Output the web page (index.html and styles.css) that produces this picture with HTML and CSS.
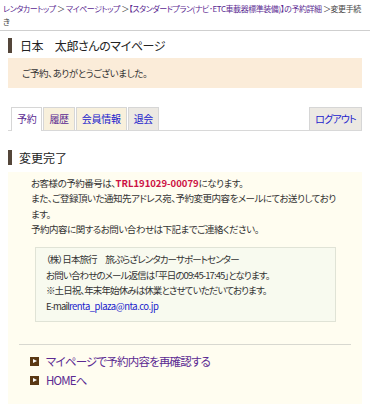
FILE: index.html
```html
<!DOCTYPE html>
<html lang="ja">
<head>
    <meta charset="UTF-8">
    <meta name="viewport" content="width=device-width, initial-scale=1.0">
    <title>変更完了 | マイページ</title>
    <link rel="stylesheet" href="styles.css">
</head>
<body>

    <!-- パンくず -->
    <div class="breadcrumb">
        <a href="#" class="visited">レンタカートップ</a> ＞ <a href="#" class="visited">マイページトップ</a> ＞<a href="#" class="visited">【スタンダードプラン(ナビ･ETC車載器標準装備)】の予約詳細</a> ＞変更手続き
    </div>

    <div class="main">
        <h1 class="page-title">日本　太郎さんのマイページ</h1>
        <div class="notice">ご予約、ありがとうございました。</div>

        <!-- タブ -->
        <div class="tabs">
            <a href="#" class="tab tab-active visited">予約</a>
            <a href="#" class="tab tab-beige visited">履歴</a>
            <a href="#" class="tab tab-beige">会員情報</a>
            <a href="#" class="tab tab-gray">退会</a>
            <a href="#" class="tab tab-gray tab-logout">ログアウト</a>
        </div>

        <h2 class="section-title">変更完了</h2>

        <div class="content">
            <p class="message">
                お客様の予約番号は、<strong class="rsv-no">TRL191029-00079</strong>になります。<br>
                また、ご登録頂いた通知先アドレス宛、予約変更内容をメールにてお送りしております。<br>
                予約内容に関するお問い合わせは下記までご連絡ください。
            </p>

            <div class="contact">
                （株）日本旅行　旅ぷらざレンタカーサポートセンター<br>
                お問い合わせのメール返信は「平日の09:45-17:45」となります。<br>
                ※土日祝、年末年始休みは休業とさせていただいております。<br>
                <span class="mail">E-mail<a href="#">renta_plaza@nta.co.jp</a></span>
            </div>

            <hr class="divider">

            <ul class="links">
                <li><span class="arrow"></span><a href="#" class="visited">マイページで予約内容を再確認する</a></li>
                <li><span class="arrow"></span><a href="#" class="visited">HOMEへ</a></li>
            </ul>
        </div>
    </div>

</body>
</html>
```

FILE: styles.css
```css
/* 基本 */
body {
    margin: 0;
    font-family: "Noto Sans CJK JP", sans-serif;
    font-feature-settings: "palt";
    color: #333;
    background: #fff;
}

a {
    color: #2222cc;
    text-decoration: none;
}

a.visited {
    color: #5b2a92;
}

/* パンくず */
.breadcrumb {
    padding: 2px 3px 2px 3px;
    font-size: 8px;
    letter-spacing: -0.45px;
    line-height: 13px;
    border-bottom: 1px solid #cfcfcf;
    color: #444;
}

.main {
    padding: 0 8px;
}

/* 見出し */
.page-title {
    margin: 7px 0 0 0;
    padding-left: 8px;
    border-left: 4px solid #54463a;
    font-size: 12px;
    letter-spacing: -0.4px;
    font-weight: normal;
    line-height: 15px;
    color: #222;
}

.notice {
    margin-top: 5px;
    height: 30px;
    line-height: 30px;
    padding: 0 14px;
    background: #fbecd9;
    font-size: 9.5px;
    letter-spacing: -0.4px;
}

/* タブ */
.tabs {
    display: flex;
    gap: 1px;
    margin-top: 19px;
    padding-left: 3px;
    border-bottom: 1px solid #d8d8d8;
}

.tab {
    display: block;
    height: 22px;
    line-height: 22px;
    padding: 0 5px;
    font-size: 10px;
    letter-spacing: -0.3px;
    border: 1px solid #d6d6d6;
    border-bottom: none;
    margin-bottom: -1px;
}

.tab-active {
    background: #fff;
    height: 23px;
}

.tab-beige {
    background: #f8f0dc;
}

.tab-gray {
    background: #ece9e3;
}

.tab-logout {
    margin-left: auto;
    padding: 0 5px;
    letter-spacing: -0.8px;
}

.section-title {
    margin: 19px 0 0 0;
    padding-left: 7px;
    border-left: 4px solid #54463a;
    font-size: 12px;
    font-weight: normal;
    line-height: 15px;
    color: #222;
}

/* 本文 */
.content {
    margin-top: 7px;
    padding: 4px 11px 20px 11px;
    background: #fffdf0;
}

.message {
    margin: 0;
    padding: 0 10px 0 12px;
    font-size: 9.5px;
    letter-spacing: -0.5px;
    line-height: 15.3px;
}

.rsv-no {
    color: #cc1144;
    letter-spacing: 0;
}

.contact {
    margin: 10px 15px 0 16px;
    padding: 4px 10px 7px 10px;
    background: #f8faef;
    border: 1px solid #e0e3d6;
    font-size: 9.5px;
    letter-spacing: -0.9px;
    line-height: 15.5px;
}

.mail a {
    color: #1a1acc;
    letter-spacing: -0.5px;
}

.divider {
    margin: 22px 0 0 0;
    border: none;
    border-top: 1px solid #d8d8d0;
}

.links {
    list-style: none;
    margin: 7px 0 0 0;
    padding: 0 0 0 11px;
    font-size: 11.5px;
    letter-spacing: -0.8px;
    line-height: 19px;
}

.links li {
    display: flex;
    align-items: center;
    gap: 7px;
}

.arrow {
    width: 9px;
    height: 9px;
    background: #5a3814;
    position: relative;
    flex: none;
}

.arrow::after {
    content: '';
    position: absolute;
    left: 3px;
    top: 2px;
    border-left: 4px solid #fff;
    border-top: 2.5px solid transparent;
    border-bottom: 2.5px solid transparent;
}
```
